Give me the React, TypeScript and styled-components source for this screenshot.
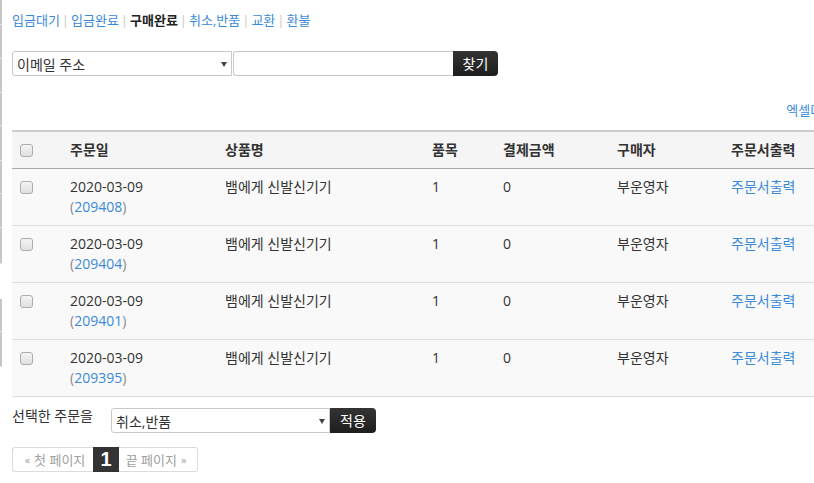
import React from "react";
import styled, { createGlobalStyle } from "styled-components";

const GlobalStyle = createGlobalStyle`
  html, body { margin: 0; padding: 0; background: #fff; overflow: hidden; }
  body {
    font-family: "Open Sans", "Noto Sans CJK KR", sans-serif;
    font-size: 14px;
    color: #333;
  }
`;

const Page = styled.div`
  display: flex;
  align-items: flex-start;
  width: 900px;
`;

const EdgeStrip = styled.div`
  display: flex;
  flex-direction: column;
  width: 2px;
  flex: 0 0 2px;
`;

const EdgeSeg = styled.div<{ $h: number; $gap?: boolean }>`
  height: ${(p) => p.$h}px;
  background: ${(p) => (p.$gap ? "transparent" : "#c6c6c6")};
  border-bottom: 1px solid ${(p) => (p.$gap ? "transparent" : "#e4e4e4")};
`;

const Main = styled.div`
  padding-left: 10px;
  width: 850px;
  flex: 0 0 850px;
`;

const Tabs = styled.div`
  padding-top: 10px;
  line-height: 20px;
  font-size: 13px;
  display: flex;
  align-items: center;
  white-space: nowrap;
`;

const TabLink = styled.a<{ $active?: boolean }>`
  color: ${(p) => (p.$active ? "#222" : "#3b8ad9")};
  font-weight: ${(p) => (p.$active ? 700 : 400)};
  text-decoration: none;
`;

const Sep = styled.span`
  color: #c8c8c8;
  margin: 0 2px;
`;

const SearchRow = styled.div`
  margin-top: 21px;
  display: flex;
  height: 25px;
`;

const SelectBox = styled.div<{ $w: number }>`
  box-sizing: border-box;
  width: ${(p) => p.$w}px;
  height: 25px;
  border: 1px solid #c9c9c9;
  border-radius: 3px 0 0 3px;
  display: flex;
  align-items: center;
  justify-content: space-between;
  padding: 0 4px 0 4px;
  font-size: 14px;
  color: #333;
  background: #fff;
`;

const Arrow = styled.span`
  width: 0;
  height: 0;
  border-left: 3px solid transparent;
  border-right: 3px solid transparent;
  border-top: 5px solid #444;
  margin-top: 1px;
`;

const TextInput = styled.input`
  box-sizing: border-box;
  width: 220px;
  height: 25px;
  margin: 0 0 0 1px;
  border: 1px solid #c9c9c9;
  border-right: none;
  border-radius: 3px 0 0 3px;
  outline: none;
  padding: 0 4px;
  font: inherit;
`;

const DarkButton = styled.button<{ $w: number }>`
  box-sizing: border-box;
  width: ${(p) => p.$w}px;
  height: 25px;
  border: none;
  border-radius: 0 4px 4px 0;
  background: linear-gradient(#333, #1e1e1e);
  color: #fff;
  font-family: "Open Sans", "Noto Sans CJK KR", sans-serif;
  font-size: 14px;
  padding: 0;
  line-height: 25px;
`;

const ExcelRow = styled.div`
  margin-top: 24px;
  line-height: 20px;
  font-size: 13px;
  text-align: right;
  padding-right: 4px;
`;

const ExcelLink = styled.a`
  color: #3b8ad9;
  text-decoration: none;
`;

const Table = styled.table`
  margin-top: 10px;
  width: 850px;
  table-layout: fixed;
  border-collapse: separate;
  border-spacing: 0;
`;

const Th = styled.th`
  text-align: left;
  font-weight: 700;
  font-size: 14px;
  line-height: 20px;
  padding: 8px 8px;
  background: #f5f5f5;
  border-top: 2px solid #cccccc;
  border-bottom: 1px solid #a8a8a8;
  vertical-align: top;
  color: #333;
`;

const Td = styled.td`
  font-size: 14px;
  line-height: 20px;
  padding: 8px 8px;
  background: #f9f9f9;
  border-bottom: 1px solid #dedede;
  vertical-align: top;
  white-space: nowrap;
  color: #333;
`;

const Check = styled.input.attrs({ type: "checkbox" })`
  appearance: none;
  -webkit-appearance: none;
  box-sizing: border-box;
  display: block;
  width: 13px;
  height: 13px;
  margin: 4px 0 0 0;
  border: 1px solid #adadad;
  border-radius: 3px;
  background: linear-gradient(#f4f4f4, #e0e0e0);
`;

const OrderNo = styled.div`
  color: #8a8a8a;
`;

const BlueLink = styled.a`
  color: #3b8ad9;
  text-decoration: none;
`;

const ActionRow = styled.div`
  margin-top: 11px;
  display: flex;
  align-items: flex-start;
  height: 25px;
`;

const ActionLabel = styled.span`
  width: 99px;
  font-size: 14px;
  line-height: 16px;
  color: #333;
`;

const Pager = styled.div`
  margin-top: 14px;
  display: flex;
  height: 25px;
`;

const PageBtn = styled.a<{ $w: number; $side: "l" | "r" }>`
  box-sizing: border-box;
  width: ${(p) => p.$w}px;
  height: 25px;
  border: 1px solid #dcdcdc;
  border-left: ${(p) => (p.$side === "r" ? "none" : "1px solid #dcdcdc")};
  border-right: ${(p) => (p.$side === "l" ? "none" : "1px solid #dcdcdc")};
  border-radius: ${(p) => (p.$side === "l" ? "3px 0 0 3px" : "0 3px 3px 0")};
  display: flex;
  align-items: center;
  justify-content: center;
  color: #a0a0a0;
  font-size: 13px;
  text-decoration: none;
`;

const PageCurrent = styled.span`
  width: 26px;
  height: 25px;
  background: #333;
  color: #fff;
  font-family: "Liberation Sans", Arial, sans-serif;
  font-weight: 700;
  font-size: 20px;
  display: flex;
  align-items: center;
  justify-content: center;
`;

const Quote = styled.span`
  font-size: 11px;
  margin: 0 4px;
`;

const edgeSegs: { h: number; gap?: boolean }[] = [
  { h: 24 }, { h: 33 }, { h: 33 }, { h: 32 }, { h: 34 }, { h: 32 }, { h: 33 }, { h: 35 },
  { h: 34, gap: true }, { h: 32 }, { h: 34 },
];

const rows = [
  { date: "2020-03-09", no: "209408" },
  { date: "2020-03-09", no: "209404" },
  { date: "2020-03-09", no: "209401" },
  { date: "2020-03-09", no: "209395" },
];

const cols = [50, 155, 207, 71, 114, 114, 139];

export default function App() {
  return (
    <>
      <GlobalStyle />
      <Page>
        <EdgeStrip>
          {edgeSegs.map((s, i) => (
            <EdgeSeg key={i} $h={s.h} $gap={s.gap} />
          ))}
        </EdgeStrip>
        <Main>
          <Tabs>
            <TabLink href="#">입금대기</TabLink>
            <Sep>|</Sep>
            <TabLink href="#">입금완료</TabLink>
            <Sep>|</Sep>
            <TabLink $active>구매완료</TabLink>
            <Sep>|</Sep>
            <TabLink href="#">취소,반품</TabLink>
            <Sep>|</Sep>
            <TabLink href="#">교환</TabLink>
            <Sep>|</Sep>
            <TabLink href="#">환불</TabLink>
          </Tabs>

          <SearchRow>
            <SelectBox $w={220}>
              <span>이메일 주소</span>
              <Arrow />
            </SelectBox>
            <TextInput type="text" />
            <DarkButton $w={45}>찾기</DarkButton>
          </SearchRow>

          <ExcelRow>
            <ExcelLink href="#">엑셀다운로드</ExcelLink>
          </ExcelRow>

          <Table>
            <colgroup>
              {cols.map((w, i) => (
                <col key={i} style={{ width: w }} />
              ))}
            </colgroup>
            <thead>
              <tr>
                <Th><Check /></Th>
                <Th>주문일</Th>
                <Th>상품명</Th>
                <Th>품목</Th>
                <Th>결제금액</Th>
                <Th>구매자</Th>
                <Th>주문서출력</Th>
              </tr>
            </thead>
            <tbody>
              {rows.map((r) => (
                <tr key={r.no}>
                  <Td><Check /></Td>
                  <Td>
                    <div>{r.date}</div>
                    <OrderNo>
                      (<BlueLink href="#">{r.no}</BlueLink>)
                    </OrderNo>
                  </Td>
                  <Td>뱀에게 신발신기기</Td>
                  <Td>1</Td>
                  <Td>0</Td>
                  <Td>부운영자</Td>
                  <Td><BlueLink href="#">주문서출력</BlueLink></Td>
                </tr>
              ))}
            </tbody>
          </Table>

          <ActionRow>
            <ActionLabel>선택한 주문을</ActionLabel>
            <SelectBox $w={219}>
              <span>취소,반품</span>
              <Arrow />
            </SelectBox>
            <DarkButton $w={46}>적용</DarkButton>
          </ActionRow>

          <Pager>
            <PageBtn href="#" $w={81} $side="l">
              <Quote>«</Quote>첫 페이지
            </PageBtn>
            <PageCurrent>1</PageCurrent>
            <PageBtn href="#" $w={79} $side="r">
              끝 페이지<Quote>»</Quote>
            </PageBtn>
          </Pager>
        </Main>
      </Page>
    </>
  );
}
